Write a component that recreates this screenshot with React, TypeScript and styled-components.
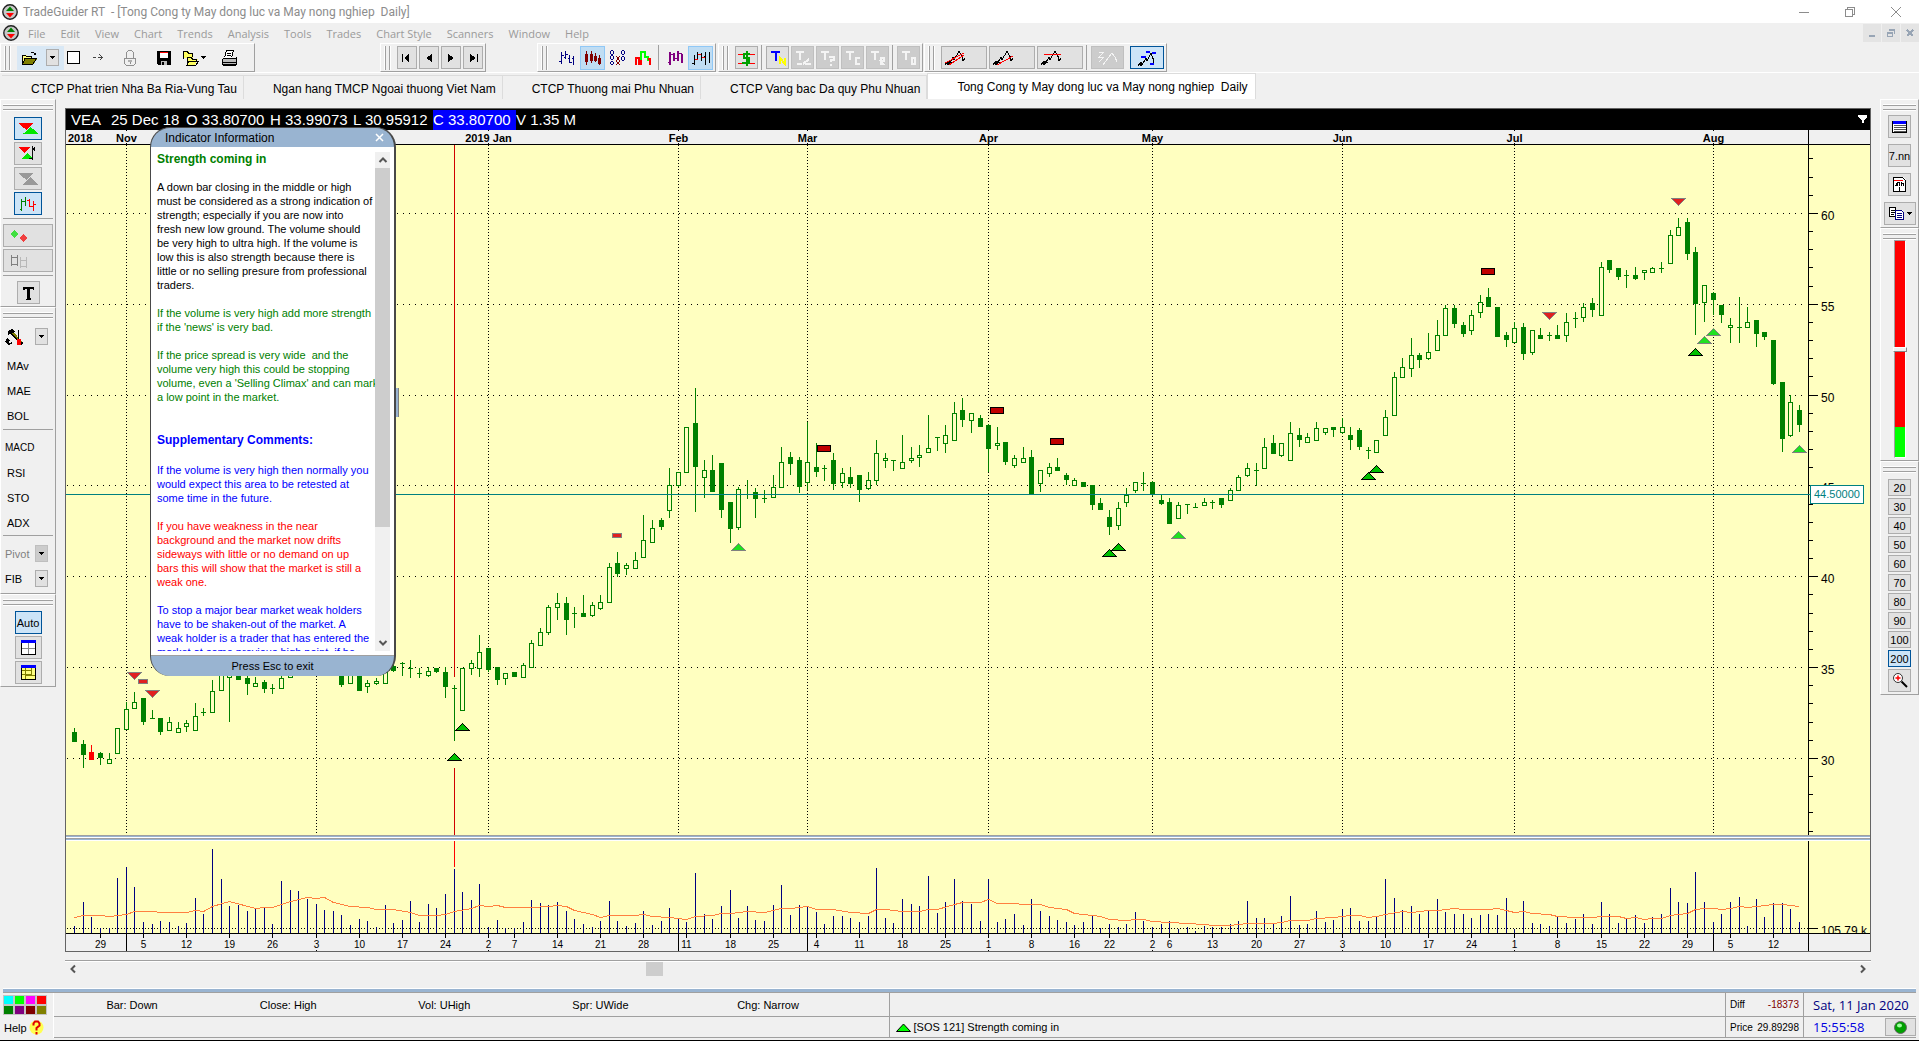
import React, { useLayoutEffect, useRef, useState } from "react";
import styled, { createGlobalStyle, css } from "styled-components";

const SANS = `"Liberation Sans", Arial, sans-serif`;
const UI = `"Open Sans", "Segoe UI", sans-serif`;
const PAPER = "#ffffc0";
const FACE = "#f0f0f0";
const EDGE = "#a0a0a0";
const STEEL = "#99b4d1";

const Global = createGlobalStyle`
  * { box-sizing: border-box; }
  html, body { margin: 0; height: 100%; }
  body { background: ${FACE}; font: 12px ${SANS}; color: #000; overflow: hidden; }
  button, input { font: inherit; color: inherit; margin: 0; padding: 0; }
`;

/* ---------- market data ---------- */

type Kind = "h" | "f" | "r" | "d";
type Candle = [number, number, number, number, number, Kind];

/* bar index, high, body top, body bottom, low, style; levels run from SCALE_TOP to SCALE_BOTTOM */
const SCALE_TOP = 145;
const SCALE_BOTTOM = 835;

const CANDLES: Candle[] = [
  [0, 728, 732, 741, 742, "f"], [1, 740, 744, 754, 768, "f"], [2, 745, 752, 759, 759, "r"], [3, 752, 753, 757, 765, "f"],
  [4, 753, 759, 763, 763, "h"], [5, 728, 728, 753, 753, "h"], [6, 702, 709, 729, 729, "h"], [7, 692, 702, 708, 708, "h"],
  [8, 698, 698, 721, 725, "f"], [9, 710, 718, 718, 718, "d"], [10, 718, 718, 731, 735, "f"], [11, 717, 722, 730, 730, "h"],
  [12, 722, 728, 732, 732, "h"], [13, 720, 723, 726, 732, "h"], [14, 703, 716, 730, 730, "h"], [15, 708, 712, 712, 715, "d"],
  [16, 680, 691, 712, 712, "h"], [17, 668, 670, 690, 690, "h"], [18, 660, 670, 677, 722, "h"], [19, 660, 662, 679, 679, "f"],
  [20, 674, 678, 683, 695, "f"], [21, 677, 683, 686, 686, "h"], [22, 680, 682, 688, 693, "f"], [23, 684, 688, 688, 693, "d"],
  [24, 676, 678, 688, 688, "h"], [25, 660, 664, 677, 677, "h"], [26, 640, 645, 668, 670, "h"], [27, 630, 640, 655, 660, "f"],
  [28, 632, 642, 658, 664, "f"], [29, 640, 646, 660, 668, "h"], [30, 644, 650, 662, 670, "f"], [31, 655, 660, 684, 687, "f"],
  [32, 664, 668, 683, 683, "h"], [33, 660, 663, 690, 691, "f"], [34, 680, 683, 686, 693, "h"], [35, 678, 681, 683, 685, "h"],
  [36, 668, 672, 683, 683, "h"], [37, 662, 666, 670, 672, "f"], [38, 662, 663, 663, 675, "d"], [39, 660, 668, 668, 677, "d"],
  [40, 668, 673, 673, 677, "d"], [41, 667, 671, 675, 677, "h"], [42, 668, 668, 671, 673, "f"], [43, 667, 672, 686, 698, "f"],
  [44, 685, 688, 688, 740, "d"], [45, 668, 668, 710, 710, "h"], [46, 660, 663, 668, 675, "h"], [47, 635, 652, 668, 677, "h"],
  [48, 648, 648, 669, 672, "f"], [49, 667, 667, 679, 685, "f"], [50, 673, 673, 678, 685, "h"], [51, 672, 672, 676, 677, "f"],
  [52, 663, 665, 677, 677, "h"], [53, 640, 643, 667, 667, "h"], [54, 628, 632, 645, 645, "h"], [55, 605, 607, 632, 635, "h"],
  [56, 593, 603, 607, 620, "h"], [57, 597, 603, 619, 635, "f"], [58, 607, 613, 613, 627, "d"], [59, 595, 613, 616, 617, "f"],
  [60, 602, 605, 615, 617, "h"], [61, 595, 602, 608, 610, "h"], [62, 563, 567, 602, 602, "h"], [63, 552, 563, 573, 577, "f"],
  [64, 563, 565, 568, 575, "h"], [65, 552, 560, 568, 568, "h"], [66, 515, 540, 557, 557, "h"], [67, 520, 528, 542, 542, "h"],
  [68, 518, 520, 526, 530, "f"], [69, 468, 485, 510, 518, "h"], [70, 472, 472, 485, 487, "h"], [71, 427, 427, 472, 472, "h"],
  [72, 388, 423, 466, 512, "f"], [73, 460, 470, 477, 498, "h"], [74, 455, 470, 491, 492, "f"], [75, 463, 463, 509, 518, "f"],
  [76, 502, 502, 528, 543, "f"], [77, 487, 489, 527, 530, "h"], [78, 480, 494, 494, 498, "d"], [79, 488, 492, 498, 518, "f"],
  [80, 490, 498, 498, 502, "d"], [81, 475, 487, 497, 497, "h"], [82, 447, 462, 487, 487, "h"], [83, 452, 457, 463, 475, "f"],
  [84, 457, 460, 486, 493, "f"], [85, 422, 462, 482, 490, "h"], [86, 443, 467, 471, 477, "f"], [87, 465, 468, 468, 480, "d"],
  [88, 453, 460, 483, 490, "f"], [89, 468, 473, 482, 488, "h"], [90, 467, 477, 483, 488, "f"], [91, 475, 475, 489, 502, "f"],
  [92, 472, 480, 488, 490, "h"], [93, 440, 453, 480, 485, "h"], [94, 453, 458, 460, 468, "h"], [95, 460, 460, 460, 470, "d"],
  [96, 435, 462, 468, 468, "h"], [97, 447, 458, 460, 463, "h"], [98, 445, 455, 457, 467, "h"], [99, 415, 448, 452, 452, "h"],
  [100, 437, 437, 437, 450, "d"], [101, 425, 435, 443, 453, "h"], [102, 402, 413, 440, 440, "h"], [103, 398, 410, 419, 427, "f"],
  [104, 413, 413, 420, 433, "h"], [105, 415, 418, 426, 427, "f"], [106, 424, 425, 448, 472, "f"], [107, 427, 443, 445, 450, "h"],
  [108, 442, 442, 461, 465, "f"], [109, 455, 458, 465, 468, "h"], [110, 447, 458, 462, 463, "h"], [111, 450, 457, 494, 494, "f"],
  [112, 470, 470, 483, 492, "h"], [113, 463, 467, 473, 477, "h"], [114, 458, 467, 470, 471, "f"], [115, 473, 475, 479, 485, "f"],
  [116, 478, 480, 485, 485, "h"], [117, 482, 482, 486, 487, "f"], [118, 485, 485, 504, 510, "f"], [119, 498, 503, 509, 509, "f"],
  [120, 510, 517, 526, 535, "f"], [121, 502, 508, 525, 530, "h"], [122, 488, 495, 502, 507, "h"], [123, 482, 482, 490, 493, "h"],
  [124, 472, 483, 483, 490, "d"], [125, 481, 482, 494, 496, "f"], [126, 495, 500, 503, 505, "f"], [127, 498, 502, 523, 523, "f"],
  [128, 502, 505, 518, 518, "h"], [129, 504, 504, 504, 513, "d"], [130, 503, 507, 507, 507, "d"], [131, 498, 502, 505, 506, "h"],
  [132, 500, 502, 502, 508, "d"], [133, 498, 498, 504, 508, "f"], [134, 488, 490, 500, 500, "h"], [135, 475, 477, 490, 490, "h"],
  [136, 463, 468, 475, 477, "h"], [137, 463, 470, 470, 485, "d"], [138, 438, 447, 468, 468, "h"], [139, 435, 443, 453, 453, "f"],
  [140, 443, 443, 455, 457, "h"], [141, 422, 433, 460, 460, "h"], [142, 428, 435, 439, 447, "f"], [143, 433, 437, 442, 442, "h"],
  [144, 422, 428, 440, 440, "h"], [145, 428, 428, 432, 435, "h"], [146, 427, 427, 429, 437, "f"], [147, 418, 427, 432, 434, "h"],
  [148, 427, 435, 439, 450, "f"], [149, 428, 430, 446, 450, "f"], [150, 447, 450, 450, 458, "d"], [151, 440, 440, 452, 452, "h"],
  [152, 410, 417, 435, 435, "h"], [153, 372, 377, 415, 415, "h"], [154, 358, 367, 377, 377, "h"], [155, 338, 355, 368, 377, "h"],
  [156, 353, 355, 359, 368, "f"], [157, 333, 352, 358, 360, "h"], [158, 320, 335, 350, 350, "h"], [159, 305, 308, 335, 335, "h"],
  [160, 305, 308, 323, 328, "f"], [161, 322, 325, 333, 337, "f"], [162, 310, 315, 330, 335, "h"], [163, 295, 302, 312, 318, "h"],
  [164, 288, 297, 306, 307, "f"], [165, 307, 307, 336, 336, "f"], [166, 332, 335, 339, 347, "f"], [167, 322, 328, 342, 343, "h"],
  [168, 323, 327, 353, 360, "f"], [169, 330, 330, 352, 355, "h"], [170, 328, 335, 338, 338, "f"], [171, 332, 335, 335, 340, "d"],
  [172, 325, 335, 338, 338, "f"], [173, 313, 322, 335, 342, "h"], [174, 312, 318, 318, 327, "d"], [175, 303, 307, 317, 322, "h"],
  [176, 298, 303, 309, 317, "f"], [177, 262, 267, 315, 315, "h"], [178, 260, 260, 269, 273, "f"], [179, 268, 268, 276, 280, "f"],
  [180, 270, 275, 275, 287, "d"], [181, 267, 275, 278, 280, "f"], [182, 270, 270, 272, 280, "h"], [183, 267, 268, 272, 272, "h"],
  [184, 262, 268, 268, 272, "d"], [185, 230, 235, 263, 263, "h"], [186, 218, 227, 235, 235, "h"], [187, 218, 222, 253, 260, "f"],
  [188, 247, 252, 303, 335, "f"], [189, 285, 285, 302, 322, "h"], [190, 292, 293, 299, 315, "f"], [191, 305, 305, 314, 323, "f"],
  [192, 318, 325, 327, 343, "h"], [193, 297, 327, 327, 342, "d"], [194, 307, 322, 327, 327, "h"], [195, 320, 320, 333, 347, "f"],
  [196, 332, 332, 336, 340, "f"], [197, 340, 340, 383, 385, "f"], [198, 382, 382, 438, 452, "f"], [199, 395, 402, 435, 437, "h"],
  [200, 405, 410, 424, 432, "f"],
];

const VOLUMES = [
  7, 31, 16, 5, 5, 55, 66, 46, 11, 9, 12, 11, 7, 10, 35, 19, 84, 54, 27, 28, 22, 25, 26, 9, 52, 43, 42, 34, 29, 23,
  22, 18, 8, 14, 12, 6, 28, 10, 13, 32, 11, 29, 25, 39, 64, 41, 33, 49, 6, 13, 5, 5, 11, 33, 30, 28, 31, 22, 14, 9,
  6, 12, 32, 12, 7, 10, 22, 8, 12, 25, 14, 11, 60, 19, 14, 27, 43, 15, 27, 13, 12, 28, 48, 18, 28, 26, 21, 9, 17, 17,
  15, 11, 17, 65, 15, 10, 34, 29, 27, 57, 20, 31, 54, 32, 29, 12, 54, 11, 14, 19, 8, 34, 22, 17, 13, 11, 8, 11, 17, 5,
  9, 6, 9, 21, 12, 6, 9, 12, 4, 6, 2, 7, 6, 6, 9, 12, 32, 15, 15, 10, 17, 37, 8, 9, 22, 11, 13, 24, 25, 12,
  12, 17, 54, 35, 23, 27, 19, 22, 34, 21, 19, 19, 15, 18, 19, 18, 35, 4, 32, 10, 9, 7, 16, 10, 14, 19, 9, 31, 19, 10,
  15, 18, 10, 16, 19, 45, 31, 30, 61, 31, 11, 19, 31, 36, 7, 34, 16, 30, 30, 24, 11,
];

const AVERAGE: [number, number][] = [
  [0, 16], [1, 18], [3, 18], [4, 17], [6, 19], [7, 22], [9, 22], [10, 21], [13, 21], [14, 23], [15, 22], [16, 27], [18, 32],
  [21, 25], [22, 26], [23, 26], [25, 32], [27, 36], [28, 35], [29, 36], [30, 31], [32, 27], [34, 26], [35, 24], [37, 24],
  [39, 21], [40, 18], [42, 18], [43, 19], [44, 22], [46, 25], [47, 28], [48, 27], [49, 28], [50, 26], [53, 26], [55, 27],
  [56, 28], [57, 27], [58, 23], [60, 19], [61, 16], [62, 18], [65, 18], [66, 19], [67, 17], [69, 16], [71, 14], [72, 17],
  [74, 18], [75, 20], [76, 20], [78, 22], [80, 21], [82, 25], [83, 25], [85, 27], [86, 24], [88, 24], [90, 21], [92, 20],
  [93, 24], [94, 24], [96, 22], [98, 22], [99, 24], [100, 24], [102, 29], [103, 31], [105, 31], [106, 34], [107, 30],
  [109, 30], [110, 29], [112, 29], [113, 26], [115, 24], [116, 20], [118, 18], [119, 17], [120, 14], [122, 13], [123, 14],
  [124, 14], [125, 12], [127, 11], [129, 10], [131, 9], [132, 8], [134, 8], [135, 9], [136, 10], [139, 10], [140, 11],
  [141, 13], [143, 13], [144, 15], [146, 16], [148, 18], [149, 18], [150, 16], [151, 17], [152, 19], [154, 22], [155, 21],
  [157, 23], [158, 23], [160, 25], [161, 24], [164, 24], [165, 25], [166, 23], [167, 21], [168, 22], [169, 20], [171, 19],
  [172, 17], [174, 16], [176, 16], [177, 17], [179, 17], [180, 15], [181, 16], [182, 14], [183, 15], [184, 15], [185, 18],
  [186, 19], [187, 20], [188, 24], [189, 25], [190, 25], [191, 24], [192, 25], [193, 27], [194, 26], [195, 27], [197, 29],
  [198, 29], [199, 28], [200, 27],
];

type MarkKind = "up" | "upLight" | "down" | "block" | "blockLight";
const MARKS: [number, number, MarkKind][] = [
  [44, 753, "up"], [45, 723, "up"], [77, 543, "upLight"], [63, 533, "blockLight"], [87, 445, "block"], [107, 407, "block"],
  [114, 438, "block"], [120, 549, "up"], [121, 543, "up"], [128, 531, "upLight"], [150, 472, "up"], [151, 465, "up"],
  [164, 268, "block"], [171, 312, "down"], [186, 198, "down"], [188, 348, "up"], [189, 336, "upLight"], [190, 328, "upLight"],
  [200, 445, "upLight"], [7, 672, "down"], [8, 679, "blockLight"], [9, 690, "down"],
];

const MONTHS: [number, string][] = [
  [6, "Nov"], [28, ""], [48, "2019 Jan"], [70, "Feb"], [85, "Mar"], [106, "Apr"], [125, "May"], [147, "Jun"], [167, "Jul"], [190, "Aug"],
];
const LONG_TICKS = [6, 70, 85, 190];
const DAYS: [number, string][] = [
  [3, "29"], [8, "5"], [13, "12"], [18, "19"], [23, "26"], [28, "3"], [33, "10"], [38, "17"], [43, "24"], [48, "2"], [51, "7"],
  [56, "14"], [61, "21"], [66, "28"], [71, "11"], [76, "18"], [81, "25"], [86, "4"], [91, "11"], [96, "18"], [101, "25"],
  [106, "1"], [111, "8"], [116, "16"], [120, "22"], [125, "2"], [127, "6"], [132, "13"], [137, "20"], [142, "27"], [147, "3"],
  [152, "10"], [157, "17"], [162, "24"], [167, "1"], [172, "8"], [177, "15"], [182, "22"], [187, "29"], [192, "5"], [197, "12"],
];
const CURSOR = 44;
const AXIS_WIDTH = 62;

/* ---------- window chrome ---------- */

const Shell = styled.div`
  display: flex;
  flex-direction: column;
  height: 100vh;
  background: ${FACE};
`;

const TitleBar = styled.header`
  display: flex;
  align-items: center;
  height: 23px;
  padding-left: 2px;
  background: #fff;
  font: 12px Roboto, "Segoe UI", sans-serif;
  color: #8c8c8c;
  white-space: pre;
  h1 { flex: 1; margin: 0 0 0 5px; font: inherit; }
`;

const CaptionButton = styled.button`
  display: grid;
  place-items: center;
  width: 46px;
  height: 23px;
  border: 0;
  background: none;
  color: #8c8c8c;
`;

const MenuBar = styled.nav`
  display: flex;
  align-items: center;
  gap: 15px;
  height: 20px;
  padding-left: 3px;
  font: 11px ${UI};
  color: #9a9a9a;
  svg { margin-right: -6px; }
`;

const MenuItem = styled.button`
  border: 0;
  background: none;
`;

const MdiButtons = styled.div`
  display: flex;
  gap: 1px;
  margin-left: auto;
  svg { margin: 0; }
`;

const MdiButton = styled.button`
  display: grid;
  place-items: center;
  width: 18px;
  height: 18px;
  border: 0;
  background: #e4e4e4;
  color: #98a5b5;
`;

const ToolRow = styled.div`
  display: flex;
  height: 30px;
  border-bottom: 1px solid #fff;
`;

const ToolBar = styled.div<{ $gap?: number }>`
  display: flex;
  align-items: center;
  height: 29px;
  margin-left: ${(p) => p.$gap ?? 0}px;
  padding: 0 2px 0 4px;
  border: solid;
  border-width: 1px;
  border-color: #fff ${EDGE} ${EDGE} #fff;
`;

const Grip = styled.i`
  width: 5px;
  height: 24px;
  margin-right: 7px;
  border: solid ${EDGE};
  border-width: 0 1px;
  box-shadow: -1px 0 #fff, 1px 0 #fff;
`;

const Divider = styled.i`
  width: 1px;
  height: 25px;
  margin: 0 4px 0 3px;
  background: ${EDGE};
`;

type Look = "flat" | "raised" | "off" | "hot" | "on";
const looks = {
  flat: css`background: none; border-color: transparent;`,
  raised: css`background: #e1e1e1; border-color: #adadad;`,
  off: css`background: #ccc; border-color: #bfbfbf;`,
  hot: css`background: #c0ddf3; border-color: #90c8f6;`,
  on: css`background: #cce4f7; border-color: #005499;`,
};

const ToolButton = styled.button<{ $w?: number; $h?: number; $look?: Look }>`
  display: flex;
  align-items: center;
  justify-content: center;
  gap: 2px;
  flex: none;
  width: ${(p) => p.$w ?? 23}px;
  height: ${(p) => p.$h ?? 23}px;
  border: 1px solid;
  ${(p) => looks[p.$look ?? "raised"]}
`;

const OpenGroup = styled.div`
  display: flex;
  align-items: center;
  gap: 5px;
  width: 47px;
  height: 24px;
  background: #d9e8f5;
`;

const Spread = styled.div<{ $gap: number }>`
  display: flex;
  gap: ${(p) => p.$gap}px;
`;

const TabRow = styled.div`
  display: flex;
  align-items: flex-end;
  height: 26px;
  padding-left: 2px;
`;

const Tab = styled.button<{ $active?: boolean }>`
  height: ${(p) => (p.$active ? 26 : 24)}px;
  padding: ${(p) => (p.$active ? "0 7px 0 29px" : "2px 6px 0 29px")};
  border: solid #dcdcdc;
  border-width: ${(p) => (p.$active ? "1px 1px 0 1px" : "1px 1px 0 0")};
  background: ${(p) => (p.$active ? "#fff" : FACE)};
  white-space: pre;
`;

const Work = styled.main`
  display: flex;
  flex: 1;
  min-height: 0;
`;

/* ---------- side docks ---------- */

const Dock = styled.aside<{ $w: number }>`
  flex: none;
  width: ${(p) => p.$w}px;
`;

const DockBar = styled.section`
  display: flex;
  flex-direction: column;
  align-items: center;
  padding: 5px 1px 2px;
  border: solid;
  border-width: 1px;
  border-color: #fff ${EDGE} ${EDGE} #fff;
  font: 11px ${SANS};
`;

const DockGrip = styled.i<{ $after?: number }>`
  width: calc(100% - 2px);
  height: 5px;
  margin-bottom: ${(p) => p.$after ?? 7}px;
  border: solid ${EDGE};
  border-width: 1px 0;
  box-shadow: 0 -1px #fff, 0 1px #fff;
`;

const Stack = styled.div<{ $gap?: number }>`
  display: flex;
  flex-direction: column;
  align-items: center;
  gap: ${(p) => p.$gap ?? 2}px;
`;

const DockRule = styled.hr<{ $space?: number }>`
  width: calc(100% - 2px);
  height: 1px;
  margin: ${(p) => p.$space ?? 2}px 0 5px;
  border: 0;
  background: ${EDGE};
`;

const DockRow = styled.div<{ $after?: number }>`
  display: flex;
  align-items: center;
  justify-content: space-between;
  width: 100%;
  height: 25px;
  margin-bottom: ${(p) => p.$after ?? 0}px;
  padding: 0 6px 0 3px;
`;

const TextButton = styled.button<{ $dim?: boolean }>`
  height: 25px;
  border: 0;
  background: none;
  color: ${(p) => (p.$dim ? "#808080" : "#000")};
`;

const WideText = styled(TextButton)<{ $small?: boolean }>`
  align-self: flex-start;
  padding-left: ${(p) => (p.$small ? 3 : 5)}px;
  font-size: ${(p) => (p.$small ? 10 : 11)}px;
`;

const Sentiment = styled.input`
  appearance: none;
  writing-mode: vertical-lr;
  width: 14px;
  height: 218px;
  background: none;
  &::-webkit-slider-runnable-track {
    width: 12px;
    height: 218px;
    border: solid;
    border-width: 1px;
    border-color: ${EDGE} #fff #fff ${EDGE};
    background: linear-gradient(#f00 86%, #0f0 86%);
  }
  &::-webkit-slider-thumb {
    appearance: none;
    width: 14px;
    height: 5px;
    margin-left: -2px;
    border: solid;
    border-width: 1px;
    border-color: #fff #888 #888 #fff;
    background: ${FACE};
  }
`;

/* ---------- chart ---------- */

const ChartColumn = styled.section`
  display: flex;
  flex-direction: column;
  flex: 1;
  min-width: 0;
  padding: 9px 9px 0 9px;
  position: relative;
`;

const Frame = styled.div`
  display: flex;
  flex-direction: column;
  flex: 1;
  min-height: 0;
  position: relative;
  border: 1px solid #646464;
`;

const Quote = styled.div`
  display: flex;
  align-items: center;
  height: 21px;
  padding: 0 3px 0 5px;
  background: #000;
  color: #fff;
  font-size: 15px;
  white-space: pre;
`;

const Field = styled.span<{ $w: number; $mark?: boolean }>`
  width: ${(p) => p.$w}px;
  line-height: 20px;
  background: ${(p) => (p.$mark ? "#00f" : "none")};
`;

const QuoteMenu = styled.button`
  margin-left: auto;
  border: 0;
  background: none;
  color: #fff;
  line-height: 0;
`;

const Pane = styled.div<{ $h?: number; $paper?: boolean }>`
  flex: ${(p) => (p.$h ? `0 0 ${p.$h}px` : "1 1 0")};
  min-height: 0;
  overflow: hidden;
  background: ${(p) => (p.$paper ? PAPER : FACE)};
  svg { display: block; width: 100%; height: 100%; }
  text { font-family: ${SANS}; font-size: 12px; }
  text.month { font-size: 11px; font-weight: bold; }
  text.tag { font-size: 11px; }
  text.day { font-size: 10px; }
`;

const Splitter = styled.div`
  height: 6px;
  background: linear-gradient(${EDGE} 1px, ${STEEL} 1px 2px, #fff 2px 3px, ${EDGE} 3px 4px, ${STEEL} 4px 5px, #fff 5px);
`;

const HScroll = styled.div`
  display: flex;
  align-items: center;
  height: 28px;
  margin-top: 8px;
  padding-bottom: 11px;
  border-top: 1px solid ${EDGE};
  box-shadow: inset 0 1px #fff;
`;

const ScrollArrow = styled.button`
  display: grid;
  place-items: center;
  width: 16px;
  height: 16px;
  border: 0;
  background: none;
`;

const ScrollLane = styled.div`
  flex: 1;
  padding-left: 31.3%;
`;

const ScrollThumb = styled.div`
  width: 17px;
  height: 14px;
  background: #cdcdcd;
`;

/* ---------- indicator window ---------- */

const InfoWindow = styled.section`
  position: absolute;
  left: 84px;
  top: 18px;
  width: 246px;
  height: 549px;
  display: flex;
  flex-direction: column;
  border: solid #484848;
  border-width: 1px 2px 0 1px;
  border-radius: 20px;
  background: ${STEEL};
`;

const InfoHandle = styled.i`
  position: absolute;
  left: 329px;
  top: 279px;
  width: 4px;
  height: 29px;
  background: ${STEEL};
  border-right: 1px solid #808080;
`;

const InfoTitle = styled.header`
  display: flex;
  align-items: center;
  justify-content: space-between;
  height: 19px;
  padding: 0 10px 0 14px;
  h2 { margin: 0; font: 12px ${SANS}; }
  button { border: 0; background: none; color: #fff; line-height: 0; }
`;

const InfoBody = styled.div`
  display: flex;
  flex: 1;
  min-height: 0;
  padding: 5px 4px 4px 6px;
  background: #fff;
`;

const Reading = styled.article`
  flex: 1;
  min-width: 0;
  overflow-x: visible;
  overflow-y: clip;
  font: 11px/14px ${SANS};
  white-space: pre;
`;

const Para = styled.p<{ $c: string; $after?: number }>`
  margin: 14px 0 ${(p) => p.$after ?? 0}px;
  color: ${(p) => p.$c};
`;

const Heading = styled.h3<{ $c: string; $after?: number }>`
  margin: 0 0 ${(p) => p.$after ?? 0}px;
  padding-top: ${(p) => (p.$after ? 1 : 0)}px;
  font: bold 12px/14px ${SANS};
  color: ${(p) => p.$c};
`;

const VScroll = styled.div`
  display: flex;
  flex-direction: column;
  justify-content: space-between;
  width: 15px;
  background: ${FACE};
`;

const VThumb = styled.div`
  flex: 0 0 359px;
  margin-bottom: auto;
  background: #cdcdcd;
`;

const InfoFoot = styled.button`
  height: 21px;
  border: 0;
  border-top: 1px solid ${EDGE};
  background: none;
  font-size: 11px;
`;

/* ---------- status area ---------- */

const Rail = styled.div`
  height: 5px;
  margin: 0 3px;
  background: linear-gradient(#fff 1px, ${STEEL} 1px 4px, ${EDGE} 4px);
`;

const Status = styled.footer`
  display: flex;
  height: 48px;
  border-bottom: 1px solid #000;
  padding: 0 3px 2px;
  font-size: 11px;
`;

const Corner = styled.div`
  display: flex;
  flex-direction: column;
  gap: 6px;
  width: 50px;
  padding: 3px 0 0 1px;
`;

const Swatches = styled.div`
  display: grid;
  grid-template-columns: repeat(4, 9px);
  gap: 2px;
`;

const Swatch = styled.i<{ $c: string }>`
  height: 8px;
  background: ${(p) => p.$c};
  box-shadow: 0 0 0 1px #c4c4c4;
`;

const HelpButton = styled.button`
  display: flex;
  align-items: center;
  gap: 2px;
  border: 0;
  background: none;
`;

const StatusRows = styled.div`
  display: flex;
  flex-direction: column;
  border-left: 1px solid #fff;
`;

const StatusRow = styled.div<{ $h: number; $pad?: number }>`
  display: flex;
  align-items: center;
  height: ${(p) => p.$h}px;
  padding-right: ${(p) => p.$pad ?? 0}px;
  border-bottom: 1px solid ${EDGE};
`;

const Wing = styled(StatusRows)<{ $grow?: number; $w?: number }>`
  flex: ${(p) => (p.$grow ? `${p.$grow} 1 0` : `0 0 ${p.$w}px`)};
  & + & { border-left-color: ${EDGE}; }
`;

const Cell = styled.span<{ $share?: number }>`
  flex: ${(p) => p.$share ?? 157} 1 0;
  text-align: center;
`;

const Signal = styled.span`
  display: flex;
  align-items: center;
  gap: 3px;
  padding-left: 6px;
  font-size: 11px;
`;

const Pair = styled.span<{ $c?: string }>`
  display: flex;
  flex: 1;
  justify-content: space-between;
  padding: 0 4px;
  font-size: 10px;
  b { font-weight: normal; color: ${(p) => p.$c ?? "#000"}; }
`;

const Clock = styled.time<{ $c: string }>`
  flex: 1;
  padding-left: 9px;
  font: 13px ${UI};
  color: ${(p) => p.$c};
`;

/* ---------- drawings ---------- */

type Stroke = [string, string, number?];
/* Each glyph is a list of [path, colour, fill?] on a pixel grid. */
const Glyph = ({ d, w = 16, h = 16 }: { d: Stroke[]; w?: number; h?: number }) => (
  <svg width={w} height={h} viewBox={`0 0 ${w} ${h}`} shapeRendering="crispEdges" aria-hidden="true">
    {d.map(([p, c, fill], k) => (
      <path key={k} d={p} fill={fill ? c : "none"} stroke={fill ? "none" : c} strokeWidth={fill === 0 ? 2 : 1} />
    ))}
  </svg>
);

const Logo = () => (
  <svg width="16" height="16" viewBox="0 0 16 16" aria-hidden="true">
    <circle cx="8" cy="8" r="7.2" fill="#c8c8c8" stroke="#222" strokeWidth="1.4" />
    <path d="M8 2.5l4 4.500H4z" fill="#008000" />
    <path d="M8 13.500l4-4.500H4z" fill="#f00" />
  </svg>
);

const Caret = ({ c = "#000" }: { c?: string }) => <Glyph w={5} h={3} d={[["M0 0h5v1h-1v1h-1v1h-1v-1h-1v-1h-1z", c, 1]]} />;

const G = {
  folder: [["M1 5h4l1 1h5v3h4l-4 6H1z", "#ffff80", 1], ["M4 9h12l-4 6H1z", "#808000", 1], ["M1.5 15V5.5h3l1 1h5v2M4 8.5h11.5l-4 6h-10zM9.5 2.5h3l2 2m0-2v2h-2", "#000"]] as Stroke[],
  sheet: [["M1 1h12v12H1z", "#fff", 1], ["M.5 .5h12v12H.5z", "#000"]] as Stroke[],
  arrow: [["M0 4.5h3M4.5 4.5h5M6.5 1.5l3 3-3 3", "#444"]] as Stroke[],
  lock: [["M4.5 8V4a3 3 0 0 1 7 0v4M2.5 8.5h11v5l-2 2h-7l-2-2zM8 10v4", "#909090"], ["M6 10h4v2H6z", "#b0b0b0", 1]] as Stroke[],
  disk: [["M1 1h14v14H2l-1-1z", "#000", 1], ["M4 2h8v6H4z", "#fff", 1], ["M4 2h8v1H4z", "#f00", 1], ["M5 11h6v4H5z", "#bbb", 1], ["M6 12h2v3H6z", "#000", 1]] as Stroke[],
  folders: [["M1 1h5v2h4v5H1zM5 7h4v2h6l-3 6H5z", "#ffff60", 1], ["M.5 8.5v-7h4l1 2h4v3M4.5 14.5v-7h4l1 2h4v1M6 11.5h9.5l-3 4h-9z", "#000"]] as Stroke[],
  printer: [["M4 1h7l-1 7H2z", "#fff", 1], ["M1 9h13v5H1z", "#bbb", 1], ["M4.5 .5h7l-2 7M4.5.5l-2 7M5 3.5h4M4.5 5.5h4M1 8.5h13l1-1M.5 8.5v6h14v-6M1 12.5h13M1 15.5h13", "#000"]] as Stroke[],
  first: [["M2 3h1v8H2zM9 3v8L4 7z", "#000", 1]] as Stroke[],
  prev: [["M10 3v8L4 7z", "#000", 1]] as Stroke[],
  next: [["M4 3v8l6-4z", "#000", 1]] as Stroke[],
  last: [["M11 3h1v8h-1zM4 3v8l6-4z", "#000", 1]] as Stroke[],
  bars: [["M2.5 2v12M0 11.5h2M3 5.5h2M6.5 1v8M5 7.5h1M7 4.5h2M10.5 5v8M9 8.5h1M11 12.5h2M14.5 6v9M13 8.5h2", "#000080"]] as Stroke[],
  candles: [["M2.5 1v14M7.5 1v12M11.5 3v9M15.5 5v10", "#800000"], ["M6 4h3v7H6zM10 6h3v5h-3z", "#800000", 1], ["M1.5 4.5h2v7h-2zM14.5 8.5h2v5h-2z", "#800000"]] as Stroke[],
  pnf: [
    ["M2.500 .5h1l1 1v2l-1 1h-1l-1-1v-2zM2.500 5.500h1l1 1v2l-1 1h-1l-1-1v-2zM2.500 11.500h1l1 1v1l-1 1h-1l-1-1v-1zM13.500 .5h1l1 1v2l-1 1h-1l-1-1v-2zM13.500 6.500h1l1 1v2l-1 1h-1l-1-1v-2z", "#000080"],
    ["M7 6l4 5M11 6l-4 5M7 11l4 4M11 11l-4 4", "#800000"],
  ] as Stroke[],
  kagi: [["M1 15V8h3v6h2V9", "#f00", 0], ["M6 10V2h4v5h3v4", "#0f0", 0], ["M13 9h2v6", "#f00", 0]] as Stroke[],
  thick: [["M2 2v13M6 3v8M10 1v10M14 4v9", "#800080", 0], ["M0 12.5h2M3 4.5h3M7 8.5h3M11 3.5h3", "#800080"]] as Stroke[],
  mixed: [["M2.5 5v10M0 13.5h2M5.5 2v8M9.5 3v8M8 4.5h1M13.5 2v13M12 6.5h1M17.5 2v11", "#000"], ["M3 9.5h3M6 4.5h3M10 7.5h3", "#f00"]] as Stroke[],
  money: [["M0 4.5h17M0 13.5h17", "#f00"], ["M12 4H6v4h5v5H4M8.5 1v15", "#00a000", 0]] as Stroke[],
  tn: [["M1 2h9M5.5 2v9", "#00f", 0], ["M10 14V8l5 6V8", "#ff0", 0]] as Stroke[],
};

const TrendGlyph = ({ red }: { red: string }) => (
  <Glyph w={38} h={17} d={[["M0 15.5l3-3 1 2 4-6 1 2 5-8 3 5 1 4 2-2M1 13l2 3 1-4 3 2", "#000"], [red, "#f00"]]} />
);

const SmallText = ({ sub }: { sub: string }) => (
  <Glyph w={17} h={17} d={[["M2 3h8M6 3v8", "#f4f4f4", 0], [sub, "#f4f4f4", 0]]} />
);

const Chevron = ({ d }: { d: string }) => (
  <svg width="10" height="10" viewBox="0 0 10 10" aria-hidden="true"><path d={d} fill="none" stroke="#555" strokeWidth="2" /></svg>
);

/* ---------- chart drawing ---------- */

function useSize() {
  const ref = useRef<HTMLDivElement>(null);
  const [size, setSize] = useState({ w: 0, h: 0 });
  useLayoutEffect(() => {
    const el = ref.current!;
    const read = () => setSize({ w: el.clientWidth, h: el.clientHeight });
    read();
    const watcher = new ResizeObserver(read);
    watcher.observe(el);
    return () => watcher.disconnect();
  }, []);
  return { ref, ...size };
}

const barX = (w: number) => (i: number) => Math.round(8.05 + (i * (w - AXIS_WIDTH - 17.1)) / 200) + 0.5;

const MonthStrip = () => {
  const { ref, w } = useSize();
  const x = barX(w);
  return (
    <Pane ref={ref} $h={15}>
      <svg shapeRendering="crispEdges">
        <text className="month" x="2" y="12">2018</text>
        {MONTHS.map(([i, name]) => (
          <g key={i}>
            <path d={`M${x(i)} 0v1M${x(i)} 13v1`} stroke="#000" />
            <text className="month" x={x(i)} y="12" textAnchor="middle">{name}</text>
          </g>
        ))}
        <path d={`M${w - AXIS_WIDTH + 0.5} 0v15M0 14.5h${w}`} stroke="#000" />
      </svg>
    </Pane>
  );
};

const Mark = ({ x, y, kind }: { x: number; y: number; kind: MarkKind }) => {
  if (kind === "block") return <rect x={x - 7} y={y + 0.5} width="13" height="6" fill="#c00000" stroke="#000" />;
  if (kind === "blockLight") return <rect x={x - 5} y={y + 0.5} width="9" height="4" fill="#e02020" stroke="#808080" />;
  if (kind === "down") return <path d={`M${x - 7} ${y + 0.5}h14l-7 7z`} fill="#e02020" stroke="#808080" />;
  const light = kind === "upLight";
  return <path d={`M${x - 7} ${y + 7.5}h14l-7 -7z`} fill={light ? "#20e020" : "#00c000"} stroke={light ? "#808080" : "#000"} />;
};

const PricePane = () => {
  const { ref, w, h } = useSize();
  const x = barX(w);
  const y = (v: number) => Math.round(((v - SCALE_TOP) * h) / (SCALE_BOTTOM - SCALE_TOP));
  const axis = w - AXIS_WIDTH;
  const levels = [60, 55, 50, 45, 40, 35, 30];
  const at = (price: number) => 212.9 + (60 - price) * 18.167;
  const minor = Array.from({ length: 38 }, (_, k) => 63 - k);
  return (
    <Pane ref={ref} $paper>
      <svg shapeRendering="crispEdges">
        {levels.map((v) => (
          <g key={v}>
            <path d={`M1 ${y(at(v)) + 0.5}H${axis - 3}`} stroke="#000" strokeDasharray="1 5" />
            <path d={`M${axis} ${y(at(v)) + 0.5}h10`} stroke="#000" />
            <text x={axis + 13} y={y(at(v)) + 7}>{v}</text>
          </g>
        ))}
        {minor.filter((v) => y(at(v)) > 0).map((v) => (
          <path key={v} d={`M${axis} ${y(at(v)) + 0.5}h5`} stroke="#000" />
        ))}
        {MONTHS.map(([i]) => (
          <path key={i} d={`M${x(i)} 0V${h}`} stroke="#000" strokeDasharray="1 2" />
        ))}
        <path d={`M${axis + 0.5} 0V${h}`} stroke="#000" />
        <path d={`M${x(CURSOR)} 0V${y(677)}M${x(CURSOR)} ${y(768)}V${h}`} stroke="#d00000" />
        {CANDLES.map(([i, hi, top, bottom, lo, kind]) => {
          const cx = x(i);
          const color = kind === "r" ? "#f00" : "#008000";
          const wick = `M${cx} ${y(hi)}V${y(top)}M${cx} ${y(bottom)}V${y(lo)}`;
          if (kind === "d") return <path key={i} d={`M${cx} ${y(hi)}V${y(lo) + 1}M${cx - 2.5} ${y(top) + 0.5}h5`} stroke={color} />;
          return (
            <g key={i} stroke={color}>
              <path d={wick} />
              {kind === "h" ? (
                <rect x={cx - 2} y={y(top) + 0.5} width="4" height={Math.max(y(bottom) - y(top), 2)} rx="1" fill={PAPER} />
              ) : (
                <rect x={cx - 2.5} y={y(top)} width="5" height={Math.max(y(bottom) - y(top) + 1, 3)} rx="1" fill={color} stroke="none" />
              )}
            </g>
          );
        })}
        {MARKS.map(([i, v, kind]) => (
          <Mark key={`${i}-${v}`} x={x(i)} y={y(v)} kind={kind} />
        ))}
        <path d={`M0 ${y(494) + 0.5}H${axis + 2}`} stroke="#008080" />
        <rect x={axis + 2.5} y={y(485) + 0.5} width="53" height="18" fill="#fff" stroke="#008080" />
        <text className="tag" x={axis + 6} y={y(485) + 13} fill="#008080">44.50000</text>
      </svg>
    </Pane>
  );
};

const VolumePane = () => {
  const { ref, w } = useSize();
  const x = barX(w);
  const axis = w - AXIS_WIDTH;
  const base = 92;
  return (
    <Pane ref={ref} $h={93} $paper>
      <svg shapeRendering="crispEdges">
        <path d={`M1 ${base - 4.5}H${axis}`} stroke="#000" strokeDasharray="1 2" />
        <path d={`M${axis} ${base - 4.5}h10`} stroke="#000" />
        <text x={axis + 13} y={base + 2}>105.79 k</text>
        {VOLUMES.map((v, i) => (
          <path key={i} d={`M${x(i)} ${base - v}V${base}`} stroke="#000080" />
        ))}
        <path d={AVERAGE.map(([i, v], k) => `${k ? "L" : "M"}${x(i)} ${base - v + 0.5}`).join("")} fill="none" stroke="#ff8040" />
        <path d={`M${x(CURSOR)} 0V26`} stroke="#f00" />
        <path d={`M${axis + 0.5} 0V93M0 ${base + 0.5}H${w}`} stroke="#000" />
      </svg>
    </Pane>
  );
};

const DayStrip = () => {
  const { ref, w } = useSize();
  const x = barX(w);
  return (
    <Pane ref={ref} $h={17}>
      <svg shapeRendering="crispEdges">
        {DAYS.map(([i, day]) => (
          <g key={i}>
            <path d={`M${x(i)} 0v4`} stroke="#000" />
            <text className="day" x={x(i)} y="14" textAnchor="middle">{day}</text>
          </g>
        ))}
        {MONTHS.map(([i]) => (
          <path key={i} d={LONG_TICKS.includes(i) ? `M${x(i)} 0v17` : `M${x(i)} 16v1`} stroke="#000" />
        ))}
        <path d={`M${w - AXIS_WIDTH + 0.5} 0v17`} stroke="#000" />
      </svg>
    </Pane>
  );
};

/* ---------- parts ---------- */

const MENUS = ["File", "Edit", "View", "Chart", "Trends", "Analysis", "Tools", "Trades", "Chart Style", "Scanners", "Window", "Help"];
const TABS = [
  "CTCP Phat trien Nha Ba Ria-Vung Tau",
  "Ngan hang TMCP Ngoai thuong Viet Nam",
  "CTCP Thuong mai Phu Nhuan",
  "CTCP Vang bac Da quy Phu Nhuan",
  "Tong Cong ty May dong luc va May nong nghiep  Daily",
];

const Tools = () => (
  <ToolRow>
    <ToolBar>
      <Grip />
      <OpenGroup>
        <ToolButton $w={24} $look="flat" aria-label="Open"><Glyph d={G.folder} /></ToolButton>
        <ToolButton $w={13} $h={17} aria-label="Open recent"><Caret /></ToolButton>
      </OpenGroup>
      <ToolButton $w={18} $look="flat" aria-label="New"><Glyph w={13} h={13} d={G.sheet} /></ToolButton>
      <ToolButton $w={31} $look="flat" aria-label="Go"><Glyph w={10} h={9} d={G.arrow} /></ToolButton>
      <ToolButton $w={34} $look="flat" aria-label="Lock"><Glyph d={G.lock} /></ToolButton>
      <ToolButton $w={33} $look="flat" aria-label="Save"><Glyph d={G.disk} /></ToolButton>
      <ToolButton $w={28} $look="flat" aria-label="Folders"><Glyph d={G.folders} /><Caret /></ToolButton>
      <ToolButton $w={44} $look="flat" aria-label="Print"><Glyph d={G.printer} /></ToolButton>
    </ToolBar>
    <ToolBar $gap={125}>
      <Grip />
      <Spread $gap={2}>
        {[G.first, G.prev, G.next, G.last].map((g, k) => (
          <ToolButton key={k} $w={20} aria-label={["First", "Previous", "Next", "Last"][k]}><Glyph w={14} h={14} d={g} /></ToolButton>
        ))}
      </Spread>
    </ToolBar>
    <ToolBar $gap={51}>
      <Grip />
      <ToolButton $w={26} $look="flat" aria-label="Bar chart"><Glyph d={G.bars} /></ToolButton>
      <ToolButton $w={25} $h={24} $look="hot" aria-label="Candles"><Glyph w={18} d={G.candles} /></ToolButton>
      <ToolButton $w={26} $look="flat" aria-label="Point and figure"><Glyph w={18} d={G.pnf} /></ToolButton>
      <ToolButton $w={24} $look="flat" aria-label="Kagi"><Glyph d={G.kagi} /></ToolButton>
      <Divider />
      <ToolButton $w={25} $look="flat" aria-label="Thick bars"><Glyph d={G.thick} /></ToolButton>
      <ToolButton $w={25} $h={24} $look="hot" aria-label="Linked bars"><Glyph w={18} d={G.mixed} /></ToolButton>
    </ToolBar>
    <ToolBar $gap={2}>
      <Grip />
      <ToolButton aria-label="Price levels"><Glyph w={17} d={G.money} /></ToolButton>
      <Divider />
      <Spread $gap={2}>
        <ToolButton aria-label="Trend now"><Glyph d={G.tn} /></ToolButton>
        <ToolButton $look="off" aria-label="Trend lines"><SmallText sub="M9 15l6-5M3 15h5M11 15h6" /></ToolButton>
        <ToolButton $look="off" aria-label="Trend query"><SmallText sub="M10 8h5v3h-3v2M12 15v2" /></ToolButton>
        <ToolButton $look="off" aria-label="Trend close"><SmallText sub="M16 9h-4v6h4" /></ToolButton>
        <ToolButton $look="off" aria-label="Trend range"><SmallText sub="M12 16V9h3v3h-3l3 4" /></ToolButton>
      </Spread>
      <Divider />
      <ToolButton $look="off" aria-label="Trend day"><SmallText sub="M12 9h3v6h-3z" /></ToolButton>
    </ToolBar>
    <ToolBar $gap={1}>
      <Grip />
      <Spread $gap={2}>
        <ToolButton $w={46} aria-label="Trend channel"><TrendGlyph red="M0 14l19-10M4 16l15-10" /></ToolButton>
        <ToolButton $w={46} aria-label="Trend support"><TrendGlyph red="M4 16l16-9" /></ToolButton>
        <ToolButton $w={46} aria-label="Resistance"><TrendGlyph red="M3 5.5h17" /></ToolButton>
      </Spread>
      <Divider />
      <Spread $gap={6}>
        <ToolButton $w={33} $look="off" aria-label="Waves"><Glyph w={19} d={[["M1 2h5l-5 5h5l-5 5M5 15l9-12 3 4 2 5", "#f4f4f4"]]} /></ToolButton>
        <ToolButton $w={34} $look="on" aria-label="Auto trends">
          <Glyph w={20} d={[["M1 15.5l3-3 1 2 4-6 1 2 4-7 2 5 1 5M3 12l1 4 2-3", "#000"], ["M4 6h5v2H4zM9 1h4v2H9zM15 2h4v2h-4zM13 13h4v2h-4z", "#00f", 1]]} />
        </ToolButton>
      </Spread>
    </ToolBar>
  </ToolRow>
);

const grid: Stroke[] = [["M0 2h15v13H0z", "#fff", 1], ["M.5 .5h14v14H.5z", "#000"], ["M1 8.5h13M7.5 3v11", "#888"], ["M0 0h15v3H0z", "#00f", 1]];

const LeftDock = () => (
  <Dock $w={56}>
    <DockBar>
      <DockGrip />
      <Stack>
        <ToolButton $w={28} $look="on" aria-label="Signals"><Glyph w={28} h={15} d={[["M4 2h15l-7 7z", "#f00", 1], ["M9 13h16l-8-7z", "#00e800", 1]]} /></ToolButton>
        <ToolButton $w={28} aria-label="Signal bars"><Glyph w={28} h={17} d={[["M4 2h12l-6 6z", "#f00", 1], ["M7 14h13l-6-6z", "#00e800", 1], ["M18.5 0v16M15 13.5h3M19 4.5h3", "#000"], ["M22 1v6l-3-3z", "#000", 1]]} /></ToolButton>
        <ToolButton $w={28} aria-label="No signals"><Glyph w={28} h={15} d={[["M4 2h15l-7 7z", "#999", 1], ["M9 14h16l-8-8z", "#999", 1]]} /></ToolButton>
        <ToolButton $w={28} $look="on" aria-label="Colour bars"><Glyph w={20} h={16} d={[["M3.5 3v12M2 13.5h1M7.5 1v9M4 5.5h3", "#008000"], ["M11.5 3v8M9 4.5h2M12 10.5h3M15.5 5v10M16 8.5h2", "#f00"]]} /></ToolButton>
      </Stack>
      <DockRule $space={3} />
      <Stack>
        <ToolButton $w={50} aria-label="Diamonds"><Glyph w={44} h={16} d={[["M4 6l4-4 4 4-4 4z", "#40e040", 1], ["M13 10l4-4 4 4-4 4z", "#f04040", 1]]} /></ToolButton>
        <ToolButton $w={50} aria-label="Pair bars"><Glyph w={44} h={16} d={[["M5.5 2v11M11.5 2v11M6 4.5h5M6 11.5h5", "#808080"], ["M14.5 4v11M20.5 4v11M15 7.5h5M15 13.5h5", "#b8b8b8"]]} /></ToolButton>
      </Stack>
      <DockRule $space={3} />
      <ToolButton aria-label="Text tool"><Glyph w={12} h={14} d={[["M1 1h11v3h-1l-1-1H8v9l1 1v1H4v-1l1-1V3H3L2 4H1z", "#000", 1]]} /></ToolButton>
    </DockBar>
    <DockBar>
      <DockGrip $after={6} />
      <DockRow $after={4}>
        <Glyph w={20} d={[["M3 2l4-2 3 2-2 2 10 10-2 2L5 5 3 6zM2 9l3 2-1 3 3-1v2l-4 1-3-3z", "#000", 1], ["M8 4l8 9", "#808000", 0], ["M12 10h4v6h-4z", "#f00", 1], ["M13.5 1v9", "#000"]]} />
        <ToolButton $w={13} $h={17} aria-label="Tool list"><Caret /></ToolButton>
      </DockRow>
      <WideText>MAv</WideText>
      <WideText>MAE</WideText>
      <WideText>BOL</WideText>
      <DockRule $space={1} />
      <WideText $small>MACD</WideText>
      <WideText>RSI</WideText>
      <WideText>STO</WideText>
      <WideText>ADX</WideText>
      <DockRule $space={0} />
      <DockRow><TextButton $dim>Pivot</TextButton><ToolButton $w={13} $h={17} $look="off" aria-label="Pivot list"><Caret /></ToolButton></DockRow>
      <DockRow><TextButton>FIB</TextButton><ToolButton $w={13} $h={17} aria-label="FIB list"><Caret /></ToolButton></DockRow>
    </DockBar>
    <DockBar>
      <DockGrip $after={6} />
      <Stack>
        <ToolButton $w={27} $look="on">Auto</ToolButton>
        <ToolButton $w={27} aria-label="Window grid"><Glyph w={15} h={15} d={grid} /></ToolButton>
        <ToolButton $w={27} aria-label="Saved layout"><Glyph w={15} h={15} d={[["M0 2h15v13H0z", "#ffff80", 1], ["M0 5.5h10v4H0M4.5 3v12M10.5 3v7M4 10.5h11", "#808000"], ["M.5 .5h14v14H.5z", "#000"], ["M0 0h15v3H0z", "#00f", 1]]} /></ToolButton>
      </Stack>
    </DockBar>
  </Dock>
);

const RightDock = () => (
  <Dock $w={39}>
    <DockBar>
      <DockGrip $after={5} />
      <Stack $gap={6}>
        <ToolButton aria-label="Calendar"><Glyph w={15} h={14} d={[["M0 1h15v12H0z", "#fff", 1], ["M.5 1.5h14v11H.5z", "#000"], ["M1 1h13v3H1z", "#00f", 1], ["M2 5.5h12M2 7.5h12M2 9.5h12M2 11.5h12", "#555"]]} /></ToolButton>
        <ToolButton>7.nn</ToolButton>
        <ToolButton aria-label="Date"><Glyph w={13} h={15} d={[["M0 0h10l3 3v12H0z", "#fff", 1], ["M.5 .5h9l3 3v11H.5zM2 8.5h1v-3M4.5 9V5.5h2V9M8.5 9V5.5l2 2v-2V9M6.5 10v4", "#000"], ["M1 3.5h9", "#f00"]]} /></ToolButton>
        <ToolButton $w={32} aria-label="Copy"><Glyph w={17} h={15} d={[["M1 1h7v9H1zM7 4h8v10H7z", "#fff", 1], ["M1.5 1.5h6v9h-6zM3 4.5h4M3 6.5h4M3 8.5h3", "#000"], ["M7.5 4.5h6l2 2v7h-8zM9 7.5h5M9 9.5h5M9 11.5h5", "#000080"]]} /><Caret /></ToolButton>
      </Stack>
    </DockBar>
    <DockBar>
      <DockGrip $after={1} />
      <Sentiment type="range" min="0" max="100" defaultValue="50" aria-label="Sentiment" />
    </DockBar>
    <DockBar>
      <DockGrip />
      <Stack>
        {[20, 30, 40, 50, 60, 70, 80, 90, 100, 200].map((n) => (
          <ToolButton key={n} $h={17} $look={n === 200 ? "on" : "raised"}>{n}</ToolButton>
        ))}
        <ToolButton aria-label="Zoom">
          <svg width="18" height="17" viewBox="0 0 18 17" aria-hidden="true">
            <circle cx="7" cy="6" r="4.5" fill="#fff" stroke="#333" /><path d="M7 3.500v5M4.500 6h5" stroke="#f00" strokeWidth="1.500" /><path d="M10.500 9.500l5.500 5.500" stroke="#000" strokeWidth="2" />
          </svg>
        </ToolButton>
      </Stack>
    </DockBar>
  </Dock>
);

const Info = () => (
  <>
    <InfoHandle />
    <InfoWindow>
      <InfoTitle>
        <h2>Indicator Information</h2>
        <button aria-label="Close">
          <svg width="9" height="9" viewBox="0 0 9 9" aria-hidden="true"><path d="M1 1l7 7M8 1L1 8" stroke="#fff" strokeWidth="1.500" /></svg>
        </button>
      </InfoTitle>
      <InfoBody>
        <Reading>
          <Heading $c="#008000">Strength coming in</Heading>
          <Para $c="#000">{`A down bar closing in the middle or high
must be considered as a strong indication of
strength; especially if you are now into
fresh new low ground. The volume should
be very high to ultra high. If the volume is
low this is also strength because there is
little or no selling presure from professional
traders.`}</Para>
          <Para $c="#008000">{`If the volume is very high add more strength
if the 'news' is very bad.`}</Para>
          <Para $c="#008000" $after={28}>{`If the price spread is very wide  and the
volume very high this could be stopping
volume, even a 'Selling Climax' and can mark
a low point in the market.`}</Para>
          <Heading $c="#00f" $after={16}>Supplementary Comments:</Heading>
          <Para $c="#00f">{`If the volume is very high then normally you
would expect this area to be retested at
some time in the future.`}</Para>
          <Para $c="#f00">{`If you have weakness in the near
background and the market now drifts
sideways with little or no demand on up
bars this will show that the market is still a
weak one.`}</Para>
          <Para $c="#00f">{`To stop a major bear market weak holders
have to be shaken-out of the market. A
weak holder is a trader that has entered the
market at some previous high point, if he`}</Para>
        </Reading>
        <VScroll>
          <ScrollArrow aria-label="Scroll up"><Chevron d="M1.500 7l3.500-3.500L8.500 7" /></ScrollArrow>
          <VThumb />
          <ScrollArrow aria-label="Scroll down"><Chevron d="M1.500 3l3.500 3.500L8.500 3" /></ScrollArrow>
        </VScroll>
      </InfoBody>
      <InfoFoot>Press Esc to exit</InfoFoot>
    </InfoWindow>
  </>
);

export default function App() {
  return (
    <Shell>
      <Global />
      <TitleBar>
        <Logo />
        <h1>TradeGuider RT  - [Tong Cong ty May dong luc va May nong nghiep  Daily]</h1>
        <CaptionButton aria-label="Minimize"><Glyph w={10} h={10} d={[["M0 5.5h10", "#8c8c8c"]]} /></CaptionButton>
        <CaptionButton aria-label="Restore"><Glyph w={10} h={10} d={[["M.5 2.500h7v7h-7zM2.500 2V.5h7v7H8", "#8c8c8c"]]} /></CaptionButton>
        <CaptionButton aria-label="Close"><Glyph w={10} h={10} d={[["M0 0l10 10M10 0L0 10", "#8c8c8c"]]} /></CaptionButton>
      </TitleBar>
      <MenuBar>
        <Logo />
        {MENUS.map((m) => <MenuItem key={m}>{m}</MenuItem>)}
        <MdiButtons>
          <MdiButton aria-label="Minimize chart"><Glyph w={8} h={8} d={[["M1 6h6v2H1z", "#98a5b5", 1]]} /></MdiButton>
          <MdiButton aria-label="Restore chart"><Glyph w={8} h={8} d={[["M2 0h6v2H2zM0 3h6v2H0zM0 3h1v5H0zM5 3h1v5H5zM0 7h6v1H0zM7 0h1v5H7z", "#98a5b5", 1]]} /></MdiButton>
          <MdiButton aria-label="Close chart"><Glyph w={8} h={8} d={[["M1 1l6 6M7 1L1 7", "#98a5b5", 0]]} /></MdiButton>
        </MdiButtons>
      </MenuBar>
      <Tools />
      <TabRow>
        {TABS.map((t, k) => <Tab key={t} $active={k === 4}>{t}</Tab>)}
      </TabRow>
      <Work>
        <LeftDock />
        <ChartColumn>
          <Frame>
            <Quote>
              <Field $w={40}>VEA</Field>
              <Field $w={75}>25 Dec 18</Field>
              <Field $w={84}>O 33.80700</Field>
              <Field $w={83}>H 33.99073</Field>
              <Field $w={80}>L 30.95912</Field>
              <Field $w={83} $mark>C 33.80700</Field>
              <Field $w={80}>V 1.35 M</Field>
              <QuoteMenu aria-label="Chart options"><Glyph w={9} h={9} d={[["M0 0h9v2l-3 4v2H4V6L0 2z", "#fff", 1]]} /></QuoteMenu>
            </Quote>
            <MonthStrip />
            <PricePane />
            <Splitter />
            <VolumePane />
            <DayStrip />
            <Info />
          </Frame>
          <HScroll>
            <ScrollArrow aria-label="Scroll left"><Chevron d="M7 1.500L3.500 5 7 8.500" /></ScrollArrow>
            <ScrollLane><ScrollThumb /></ScrollLane>
            <ScrollArrow aria-label="Scroll right"><Chevron d="M3 1.500L6.500 5 3 8.500" /></ScrollArrow>
          </HScroll>
        </ChartColumn>
        <RightDock />
      </Work>
      <Rail />
      <Status>
        <Corner>
          <Swatches>
            {["#0ff", "#0f0", "#f0f", "#f00", "#008000", "#800080", "#800000", "#808000"].map((c) => <Swatch key={c} $c={c} />)}
          </Swatches>
          <HelpButton>
            Help
            <svg width="15" height="15" viewBox="0 0 15 15" aria-hidden="true">
              <circle cx="7.500" cy="7.500" r="7" fill="#ffff50" />
              <path d="M4.500 5.500V3.500l1.500-2h3l1.500 2v2L7.500 8v2.500M7.500 12v2.500" fill="none" stroke="#e00000" strokeWidth="2" />
            </svg>
          </HelpButton>
        </Corner>
        <Wing $grow={835}>
          <StatusRow $h={24} $pad={31}>
            <Cell>Bar: Down</Cell><Cell>Close: High</Cell><Cell>Vol: UHigh</Cell><Cell>Spr: UWide</Cell><Cell $share={180}>Chg: Narrow</Cell>
          </StatusRow>
          <StatusRow $h={21} />
        </Wing>
        <Wing $grow={836}>
          <StatusRow $h={24} />
          <StatusRow $h={21}>
            <Signal>
              <svg width="15" height="9" viewBox="0 0 15 9" aria-hidden="true"><path d="M.5 8.500h14l-7-7.500z" fill="#0f0" stroke="#000" /></svg>
              [SOS 121] Strength coming in
            </Signal>
          </StatusRow>
        </Wing>
        <Wing $w={78}>
          <StatusRow $h={24}><Pair $c="#800000">Diff <b>-18373</b></Pair></StatusRow>
          <StatusRow $h={21}><Pair>Price <b>29.89298</b></Pair></StatusRow>
        </Wing>
        <Wing $w={113}>
          <StatusRow $h={24}><Clock $c="#000080">Sat, 11 Jan 2020</Clock></StatusRow>
          <StatusRow $h={21}>
            <Clock $c="#0000e0">15:55:58</Clock>
            <ToolButton $w={31} $h={18} aria-label="Connection">
              <svg width="13" height="13" viewBox="0 0 13 13" aria-hidden="true"><circle cx="6.500" cy="6.500" r="6" fill="#00a000" stroke="#666" /><ellipse cx="5.500" cy="4.500" rx="2.500" ry="2" fill="#a0ffa0" /></svg>
            </ToolButton>
          </StatusRow>
        </Wing>
      </Status>
    </Shell>
  );
}
